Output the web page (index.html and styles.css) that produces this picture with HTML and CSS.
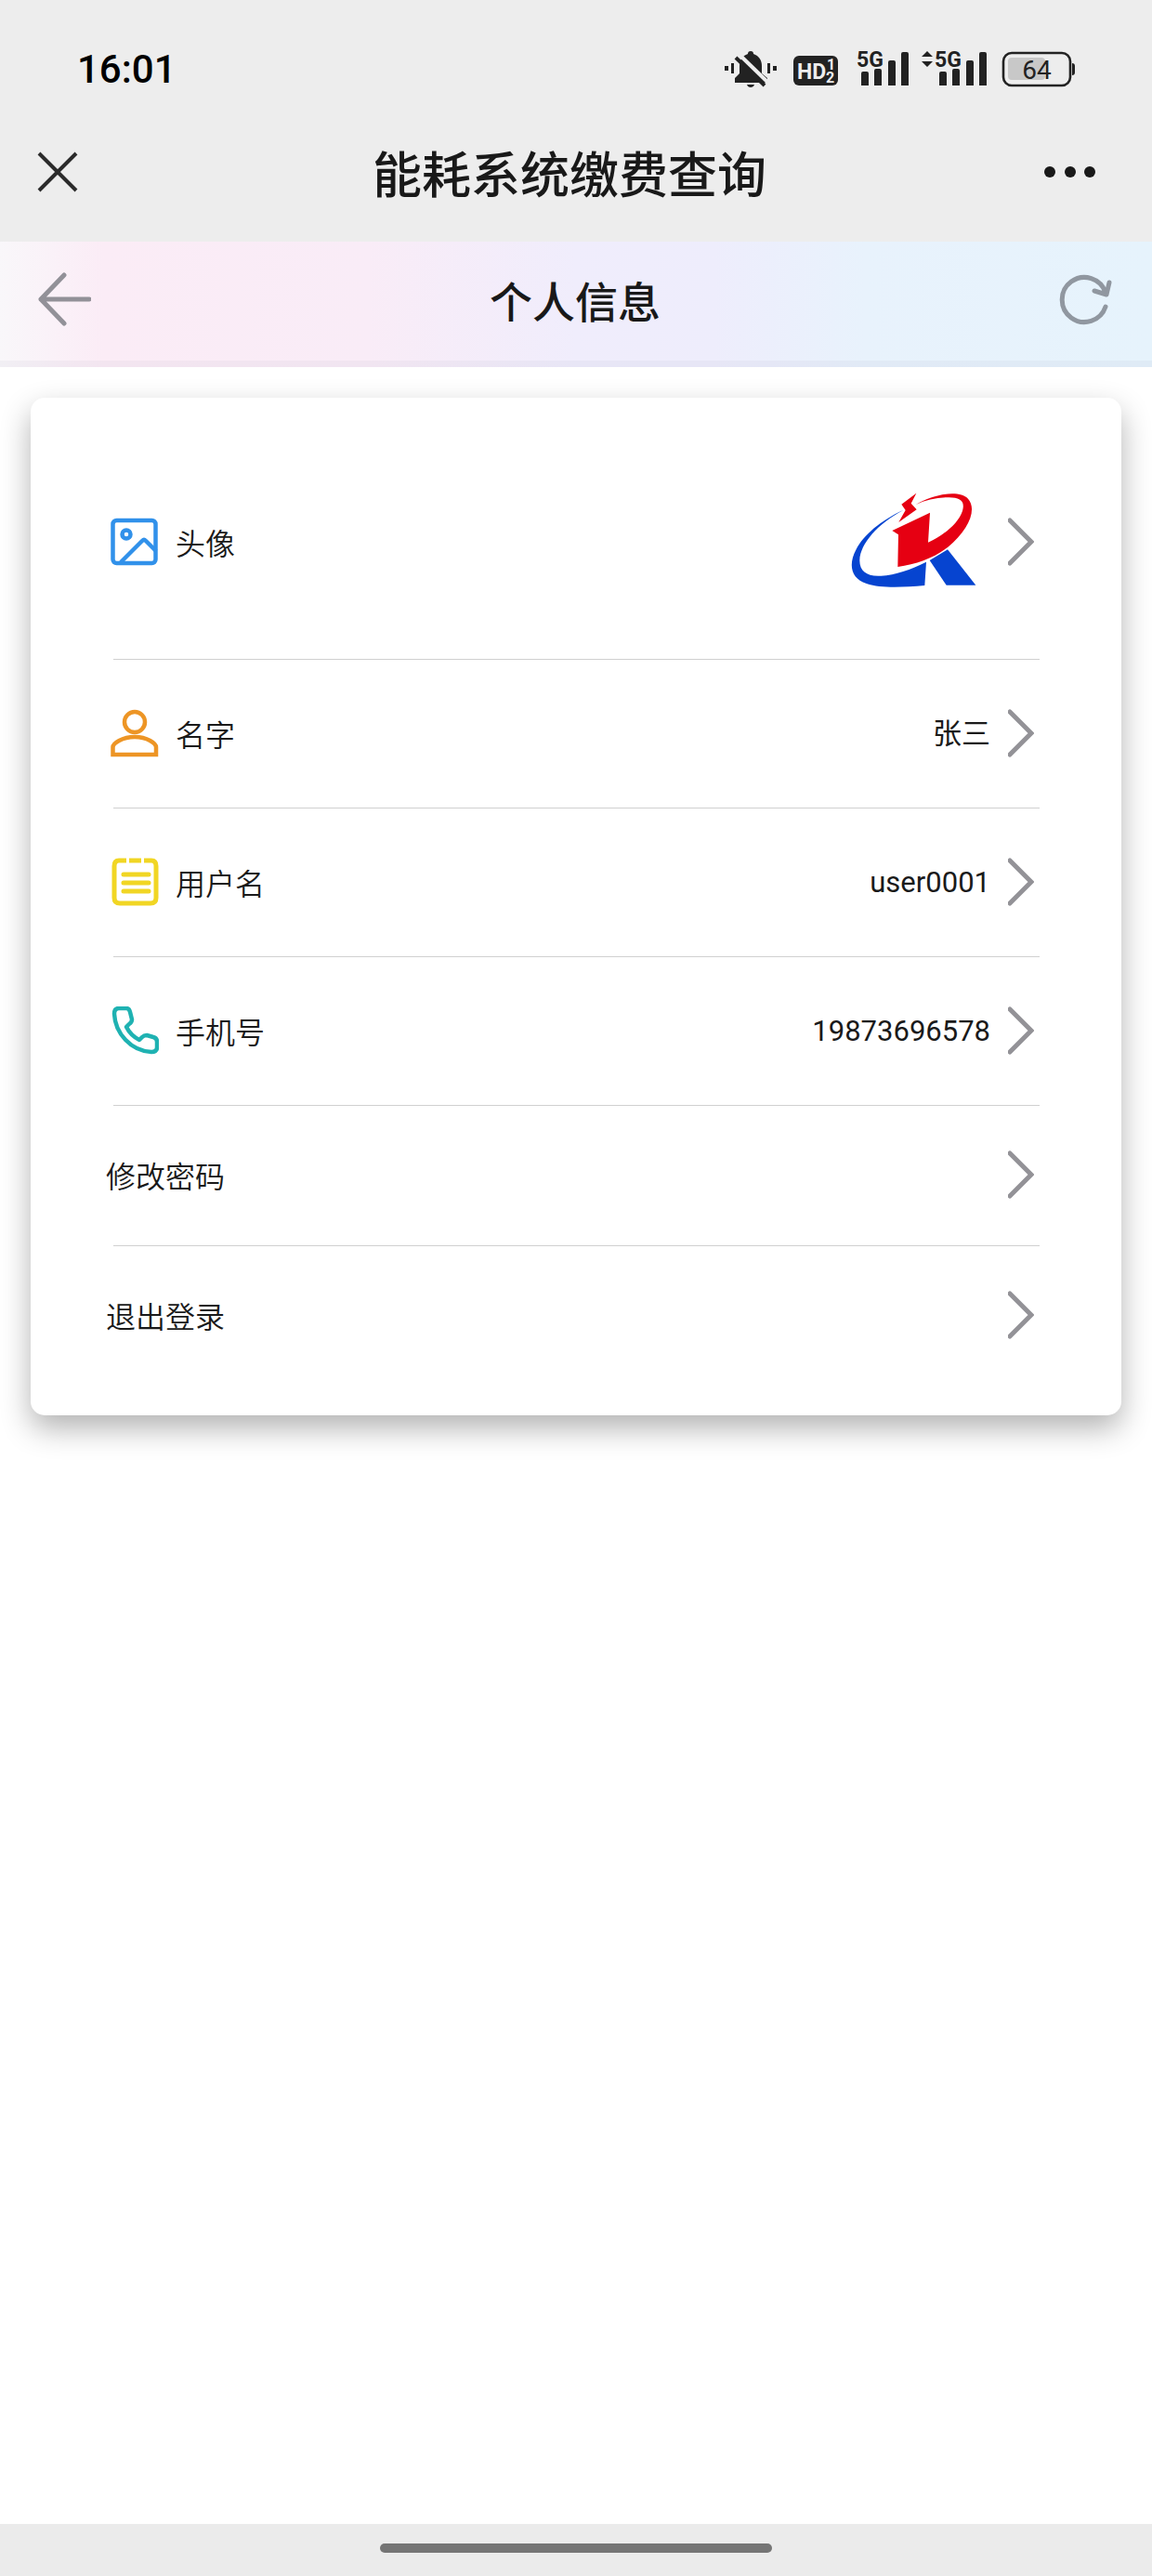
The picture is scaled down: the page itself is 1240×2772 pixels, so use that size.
FILE: index.html
```html
<!DOCTYPE html>
<html lang="zh-CN">
<head>
  <meta charset="UTF-8">
  <meta name="viewport" content="width=device-width, initial-scale=1">
  <title>个人信息</title>
  <link rel="stylesheet" href="styles.css">
</head>
<body>
  <!-- Status bar -->
  <div class="status-bar">
    <span class="time">16:01</span>
    <svg class="status-icons" width="380" height="58" viewBox="780 45 380 58" fill="#222">
      <!-- muted bell -->
      <path d="M781 71h4v5h-4zM788 68h3v11h-3zM827 68h3v11h-3zM833 71h4v5h-4z"/>
      <path d="M806 58a3 3 0 0 1 6 0c6 2 9 7 9 13v8l6 5v5h-35v-5l5-5v-8c0-6 3-11 9-13zM805 91h8c-1 4-7 4-8 0z"/>
      <path d="M796 58l33 32" stroke="#ededed" stroke-width="4"/>
      <path d="M793 62l31 30" stroke="#222" stroke-width="4"/>
      <!-- HD -->
      <rect x="855" y="60" width="48" height="32" rx="6"/>
      <text class="hd" x="859" y="85" font-size="23">HD</text>
      <text class="hd" x="891" y="75" font-size="16">1</text>
      <text class="hd" x="890" y="89" font-size="16">2</text>
      <!-- signal 1 -->
      <text class="net" x="923" y="72">5G</text>
      <path d="M928 79q0-2 2-2h4q2 0 2 2v13h-8zM942 76q0-2 2-2h4q2 0 2 2v16h-8zM957 67q0-2 2-2h4q2 0 2 2v25h-8zM971 58q0-2 2-2h4q2 0 2 2v34h-8z"/>
      <!-- signal 2 -->
      <path d="M993 61l6-6 6 6zM993 66l6 6 6-6z"/>
      <text class="net" x="1007" y="72">5G</text>
      <path d="M1012 79q0-2 2-2h4q2 0 2 2v13h-8zM1026 76q0-2 2-2h4q2 0 2 2v16h-8zM1041 67q0-2 2-2h4q2 0 2 2v25h-8zM1055 58q0-2 2-2h4q2 0 2 2v34h-8z"/>
      <!-- battery -->
      <rect x="1086" y="62" width="40" height="24" rx="4" fill="#c8c8c8"/>
      <rect x="1081" y="57" width="72" height="35" rx="9" fill="none" stroke="#222" stroke-width="2.6"/>
      <path d="M1155 68q3 0 3 3v7q0 3-3 3z"/>
      <text class="level" x="1117" y="85">64</text>
    </svg>
  </div>

  <!-- App title -->
  <header class="app-bar">
    <button class="icon-btn close" aria-label="关闭">
      <svg width="44" height="44" viewBox="0 0 44 44" fill="none" stroke="#2b2b2b" stroke-width="4">
        <path d="M2 2l40 40M42 2L2 42"/>
      </svg>
    </button>
    <h1>能耗系统缴费查询</h1>
    <button class="icon-btn" aria-label="更多">
      <svg width="56" height="44" viewBox="0 0 56 44" fill="#191919">
        <circle cx="6" cy="22" r="6"/>
        <circle cx="28" cy="22" r="6"/>
        <circle cx="49" cy="22" r="6"/>
      </svg>
    </button>
  </header>

  <!-- Page title -->
  <nav class="page-bar">
    <button class="icon-btn" aria-label="返回">
      <svg width="58" height="58" viewBox="0 0 58 58" fill="none" stroke="#929198" stroke-width="5" stroke-linecap="round" stroke-linejoin="round">
        <path d="M29 3L4 29l25 26M4 29h52"/>
      </svg>
    </button>
    <h2>个人信息</h2>
    <button class="icon-btn" aria-label="刷新">
      <svg width="58" height="58" viewBox="0 0 58 58" fill="none" stroke="#9097a0" stroke-width="5" stroke-linecap="round" stroke-linejoin="round">
        <path d="M50 37A24 24 0 1 1 50 22M38 20l13 4 3-13"/>
      </svg>
    </button>
  </nav>

  <main class="content">
    <ul class="card">
      <li>
        <button class="row row-avatar">
          <svg class="row-icon" width="52" height="52" viewBox="0 0 52 52" fill="none" stroke="#3191ea" stroke-width="4.5">
            <rect x="2.500" y="3" width="46" height="46" rx="4"/>
            <circle cx="17" cy="18" r="4.5"/>
            <path d="M11 48l23-23q2-2 4 0l11 11"/>
          </svg>
          <span class="label">头像</span>
          <svg width="150" height="110" viewBox="110 85 450 330">
            <path fill="#e60012" d="M321 93l-48 36 13 19-22 39 58-41-18-20z"/>
            <path fill="#e60012" d="M319 130C385 93 460 83 488 111c31 35 0 104-65 156-45 35-101 55-162 64l2-104-20-13 122-58-6 96c52-24 98-62 111-102 10-34-11-45-52-43-35 1-68 9-99 23z"/>
            <path fill="#0644d0" d="M279 148C205 181 150 230 127 274c-27 50-17 94 33 111 47 16 119 12 188 6l5-76c-50 25-100 42-146 45-45 3-70-14-69-51 2-53 59-118 141-161z"/>
            <path fill="#0644d0" d="M364 310l58-35 91 115h-95z"/>
          </svg>
          <svg class="chevron" width="28" height="52" viewBox="0 0 28 52"><path d="M2 3l23 23L2 49"/></svg>
        </button>
      </li>
      <li>
        <button class="row">
          <svg class="row-icon" width="52" height="52" viewBox="0 0 52 52" fill="none" stroke="#ed9525" stroke-width="4.5">
            <circle cx="26" cy="14" r="11"/>
            <path d="M2.500 49V41c0-4 10-11 23.500-11S49 37 49 41v8z"/>
          </svg>
          <span class="label">名字</span>
          <span class="value">张三</span>
          <svg class="chevron" width="28" height="52" viewBox="0 0 28 52"><path d="M2 3l23 23L2 49"/></svg>
        </button>
      </li>
      <li>
        <button class="row">
          <svg class="row-icon" width="52" height="52" viewBox="0 0 52 52" fill="none" stroke="#f1d624" stroke-width="5">
            <path d="M17 3H9Q4 3 4 9v34q0 6 6 6h33q6 0 6-6V9q0-6-5-6h-8M20 3h13"/>
            <path d="M14 18h27M14 27h27M14 36h27" stroke-linecap="round"/>
          </svg>
          <span class="label">用户名</span>
          <span class="value">user0001</span>
          <svg class="chevron" width="28" height="52" viewBox="0 0 28 52"><path d="M2 3l23 23L2 49"/></svg>
        </button>
      </li>
      <li>
        <button class="row">
          <svg class="row-icon" width="52" height="52" viewBox="0 0 52 52" fill="none" stroke="#1fb2b2" stroke-width="4.5" stroke-linejoin="round">
            <path d="M9 2h8q3 0 4 4l2 8q0 3-3 5l-3 3c3 6 8 11 14 14l3-3q2-2 5-2l7 2q4 1 4 5v6q0 5-6 5C22 48 5 29 4 8q0-6 5-6z"/>
          </svg>
          <span class="label">手机号</span>
          <span class="value">19873696578</span>
          <svg class="chevron" width="28" height="52" viewBox="0 0 28 52"><path d="M2 3l23 23L2 49"/></svg>
        </button>
      </li>
      <li>
        <button class="row row-plain">
          <span class="label">修改密码</span>
          <svg class="chevron" width="28" height="52" viewBox="0 0 28 52"><path d="M2 3l23 23L2 49"/></svg>
        </button>
      </li>
      <li>
        <button class="row row-plain">
          <span class="label">退出登录</span>
          <svg class="chevron" width="28" height="52" viewBox="0 0 28 52"><path d="M2 3l23 23L2 49"/></svg>
        </button>
      </li>
    </ul>
  </main>

  <footer class="gesture-bar"><span class="pill"></span></footer>
</body>
</html>
```

FILE: styles.css
```css
* {
  box-sizing: border-box;
}

body {
  margin: 0;
  min-height: 100vh;
  display: flex;
  flex-direction: column;
  background-color: #fff;
  color: #1a1a1a;
  font-family: "Noto Sans CJK SC", sans-serif;
}

h1, h2 {
  flex: 1;
  margin: 0;
  font-weight: 500;
  text-align: center;
  color: #191919;
}

button {
  padding: 0;
  border: none;
  background: none;
  color: inherit;
  font: inherit;
  cursor: pointer;
}

svg {
  display: block;
  flex-shrink: 0;
}

/* status bar */
.status-bar {
  display: flex;
  align-items: center;
  justify-content: space-between;
  height: 112px;
  padding: 36px 81px 0 83px;
  background-color: #ededed;
  font-family: Roboto, sans-serif;
}

.time {
  font-size: 42px;
  font-weight: 500;
  color: #000;
}

.hd {
  fill: #ededed;
  font-weight: 700;
}

.net {
  font-size: 23px;
  font-weight: 700;
}

.level {
  font-size: 28px;
  text-anchor: middle;
}

/* title bars */
.app-bar {
  display: flex;
  align-items: center;
  height: 148px;
  padding: 0 60px 2px 40px;
  background-color: #ededed;
}

.app-bar h1 {
  font-size: 53px;
  line-height: 60px;
}

.close {
  width: 62px;
}

.page-bar {
  display: flex;
  align-items: center;
  height: 135px;
  padding: 0 42px 4px 40px;
  border-bottom: 7px solid rgba(120, 120, 150, 0.06);
  background: linear-gradient(90deg, #f9f7fa 0%, #fbecf6 9%, #f9ecf7 32%, #f0edfc 50%, #eeedfc 62%, #e8f2fc 75%, #e6f3fc 100%);
}

.page-bar h2 {
  font-size: 46px;
  line-height: 60px;
}

/* info card */
.content {
  flex: 1;
  padding: 33px;
}

.card {
  margin: 0;
  padding: 30px 88px 32px 81px;
  list-style: none;
  border-radius: 15px;
  background-color: #fff;
  box-shadow: 0 14px 32px rgba(0, 0, 0, 0.3);
}

.card li + li::before {
  content: "";
  display: block;
  height: 1px;
  margin-left: 8px;
  background-color: #d0d0d0;
}

.row {
  display: flex;
  align-items: center;
  width: 100%;
  height: 159px;
  padding: 0 6px 2px 0;
  font-size: 32px;
  font-weight: 350;
  line-height: 40px;
}

.row-avatar {
  height: 251px;
}

.row-plain {
  height: 150px;
}

.row-icon {
  margin: 0 18px 0 5px;
}

.label {
  flex: 1;
  text-align: left;
}

.value {
  padding-top: 3px;
  font-family: Roboto, "Noto Sans CJK SC", sans-serif;
  font-size: 31px;
  font-weight: 400;
}

.chevron {
  margin-left: 19px;
  fill: none;
  stroke: #939297;
  stroke-width: 5;
  stroke-linecap: round;
}

/* home gesture bar */
.gesture-bar {
  display: flex;
  justify-content: center;
  height: 56px;
  padding-top: 21px;
  background-color: #ebebeb;
}

.pill {
  width: 34%;
  height: 10px;
  border-radius: 5px;
  background-color: #757575;
}
```
